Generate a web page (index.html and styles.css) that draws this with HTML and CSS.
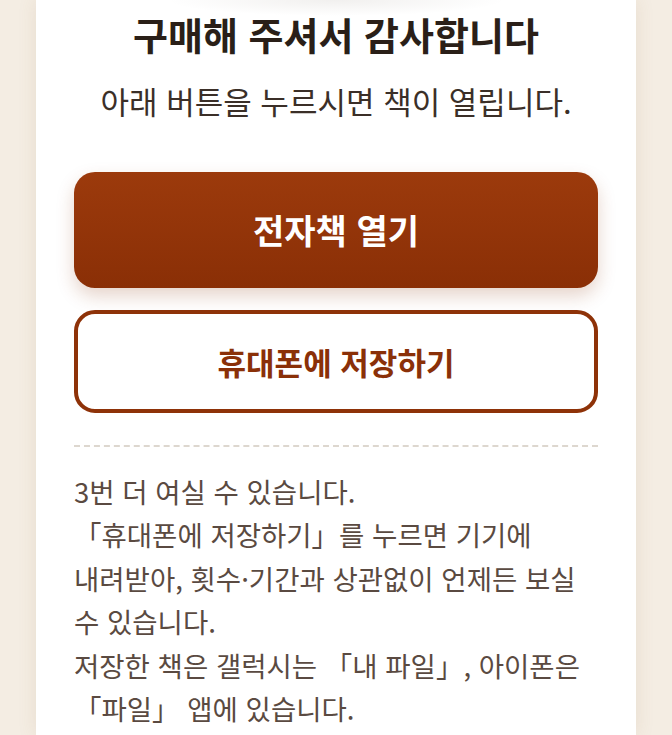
FILE: index.html
```html
<!DOCTYPE html>
<html lang="ko">
<head>
<meta charset="utf-8">
<title>구매해 주셔서 감사합니다</title>
<link rel="stylesheet" href="styles.css">
</head>
<body>
<main class="card">
  <h1 class="title">구매해 주셔서 감사합니다</h1>
  <p class="subtitle">아래 버튼을 누르시면 책이 열립니다.</p>
  <div class="actions">
    <button class="btn btn-primary" type="button">전자책 열기</button>
    <button class="btn btn-outline" type="button">휴대폰에 저장하기</button>
  </div>
  <hr class="divider">
  <p class="info">3번 더 여실 수 있습니다.<br>「휴대폰에 저장하기」를 누르면 기기에 내려받아, 횟수·기간과 상관없이 언제든 보실 수 있습니다.<br>저장한 책은 갤럭시는 「내 파일」, 아이폰은 「파일」 앱에 있습니다.</p>
</main>
</body>
</html>
```

FILE: styles.css
```css
html, body {
  margin: 0;
  padding: 0;
}
body {
  background: #f4ede3;
  font-family: "Noto Sans CJK KR", "Noto Sans", sans-serif;
  min-height: 735px;
  overflow: hidden;
}
.card {
  width: 600px;
  margin: 0 auto;
  min-height: 735px;
  box-sizing: border-box;
  padding: 9px 38px 0;
  background:
    radial-gradient(ellipse 170px 16px at 50% 0, rgba(60, 40, 20, 0.07), rgba(60, 40, 20, 0) 100%),
    #ffffff;
  box-shadow: 0 0 18px rgba(150, 110, 60, 0.12);
}
.title {
  margin: 0;
  font-size: 38px;
  line-height: 1.3;
  font-weight: 700;
  color: #2a1f18;
  text-align: center;
}
.subtitle {
  margin: 20px 0 0;
  font-size: 31px;
  line-height: 1.5;
  font-weight: 400;
  color: #3b2f28;
  text-align: center;
}
.actions {
  margin-top: 47px;
  display: flex;
  flex-direction: column;
  gap: 22px;
}
.btn {
  display: flex;
  align-items: center;
  justify-content: center;
  width: 100%;
  box-sizing: border-box;
  font-family: inherit;
  font-weight: 700;
  border-radius: 21px;
  cursor: pointer;
}
.btn-primary {
  height: 116px;
  border: none;
  font-size: 34px;
  color: #ffffff;
  background: linear-gradient(180deg, #9c3a0c 0%, #8a2f06 100%);
  box-shadow: 0 8px 18px rgba(140, 60, 20, 0.22);
}
.btn-outline {
  height: 103px;
  border: 4.5px solid #8e3208;
  font-size: 31px;
  color: #8a3008;
  background: #ffffff;
}
.divider {
  margin: 32px 0 0;
  border: 0;
  border-top: 2px dashed #ddd7cf;
  height: 0;
}
.info {
  margin: 23px 0 0;
  font-size: 27.5px;
  line-height: 43.5px;
  color: #5a4a41;
  word-break: keep-all;
}
```
